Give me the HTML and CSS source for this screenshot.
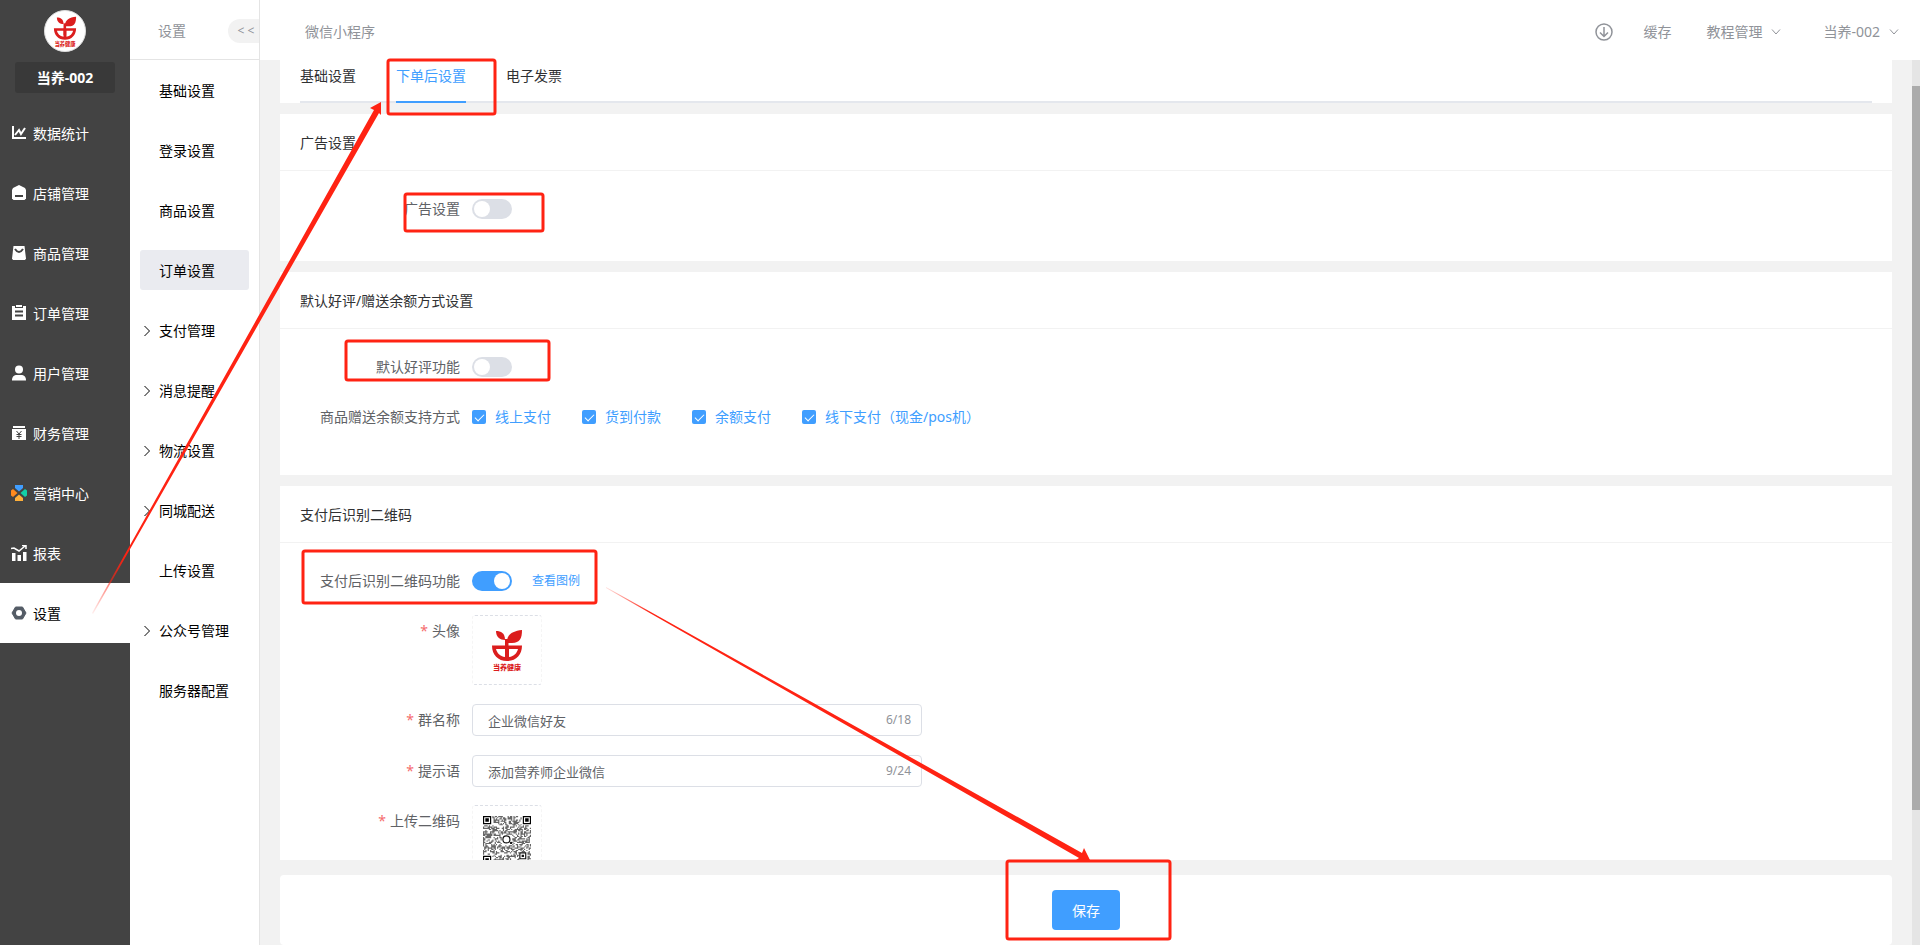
FILE: index.html
```html
<!DOCTYPE html>
<html lang="zh-CN">
<head>
    <meta charset="UTF-8">
    <meta name="viewport" content="width=device-width, initial-scale=1.0">
    <title>订单设置</title>
    <link rel="stylesheet" href="styles.css">
</head>
<body>
    <svg class="defs" width="0" height="0" aria-hidden="true">
        <symbol id="logo" viewBox="0 0 40 50" overflow="visible">
            <g fill="#db1d1d">
                <path d="M9 6c5 0 9 2 9 9-5 0-9-3-9-9z"/>
                <path d="M35 5c0 8-2 13-10 13h-4l-1-1C20 9 26 6 35 5z"/>
                <path d="M5 20.500h30C35 30 29 36 20 36S5 30 5 20.500zM9 24c1 4 4 7.500 9 8v-8zM22 24v8c5-.5 8-4 9-8z" fill-rule="evenodd"/>
                <path d="M18 14h3.500v16H18z"/>
                <text x="20" y="45" text-anchor="middle" class="logo-text">当养健康</text>
            </g>
        </symbol>
        <symbol id="arrow-down" viewBox="0 0 10 6">
            <path d="M1 .5l4 4.500 4-4.500" fill="none" stroke="currentColor"/>
        </symbol>
        <symbol id="arrow-right" viewBox="0 0 6 12">
            <path d="M.5 1l5 5-5 5" fill="none" stroke="currentColor"/>
        </symbol>
    </svg>

    <div class="app">
        <aside class="sidebar">
            <div class="brand">
                <span class="brand-logo"><svg width="30" height="37"><use href="#logo"/></svg></span>
                <span class="brand-name">当养-002</span>
            </div>
            <nav class="main-nav">
                <a href="#">
                    <svg viewBox="0 0 16 16"><path d="M2 1v12h13" fill="none" stroke="#fff" stroke-width="2"/><path d="M4 10l4-5 2 4 4-6" fill="none" stroke="#fff" stroke-width="2"/></svg>
                    <span>数据统计</span>
                </a>
                <a href="#">
                    <svg viewBox="0 0 16 16"><path d="M8 0l6 3 1 2v8.500L13.500 15h-11L1 13.500V5l1-2z" fill="#fff"/><path d="M4 11h8" stroke="#434343" stroke-width="2"/></svg>
                    <span>店铺管理</span>
                </a>
                <a href="#">
                    <svg viewBox="0 0 16 16"><path d="M2.500 1h11L15 13.500 14 15H2l-1-1.500z" fill="#fff"/><path d="M4 4q4 6 8 0" fill="none" stroke="#434343" stroke-width="2"/></svg>
                    <span>商品管理</span>
                </a>
                <a href="#">
                    <svg viewBox="0 0 16 16"><path d="M1 1h3v2h8V1h3v14H1z" fill="#fff"/><path d="M5 0h6v2H5z" fill="#fff"/><path d="M4 6.500h8M4 10.500h8" stroke="#434343" stroke-width="2"/></svg>
                    <span>订单管理</span>
                </a>
                <a href="#">
                    <svg viewBox="0 0 16 16"><circle cx="8" cy="4.500" r="4" fill="#fff"/><path d="M1 15.500c0-4 2-5.500 5-5.500h4c3 0 5 1.500 5 5.500z" fill="#fff"/></svg>
                    <span>用户管理</span>
                </a>
                <a href="#">
                    <svg viewBox="0 0 16 16"><path d="M2 1h12v2H2zM1 4h14v11H1z" fill="#fff"/><path d="M5.500 6L8 9l2.500-3M8 9v5M5.500 9.500h5M5.500 11.500h5" fill="none" stroke="#434343"/></svg>
                    <span>财务管理</span>
                </a>
                <a href="#">
                    <svg viewBox="0 0 16 16"><path d="M4 0h8v3L8 6.500 4 3z" fill="#409eff"/><path d="M4 16h8v-3L8 9.500 4 13z" fill="#ffb03a"/><path d="M0 5.500L2 4l4.500 4L2 12l-2-1.500z" fill="#ff8a1e"/><path d="M16 5.500L14 4 9.500 8l4.500 4 2-1.500z" fill="#12d0a8"/></svg>
                    <span>营销中心</span>
                </a>
                <a href="#">
                    <svg viewBox="0 0 16 16"><path d="M1 8h3.500v8H1zM6.500 10H10v6H6.500zM12 7h3.500v9H12z" fill="#fff"/><path d="M0 3.500l3-.5 5 3 6-5M11 .5h4v3.500" fill="none" stroke="#fff" stroke-width="1.500"/></svg>
                    <span>报表</span>
                </a>
                <a href="#" class="active">
                    <svg viewBox="0 0 16 16"><path d="M4.500 2h7L15 8l-3.500 6h-7L1 8z" fill="#545c66" stroke="#545c66" stroke-linejoin="round"/><circle cx="8" cy="8" r="3" fill="#fff"/></svg>
                    <span>设置</span>
                </a>
            </nav>
        </aside>

        <aside class="submenu">
            <div class="submenu-head">
                <span>设置</span>
                <button type="button" class="fold">&lt; &lt;</button>
            </div>
            <nav class="sub-nav">
                <a href="#">基础设置</a>
                <a href="#">登录设置</a>
                <a href="#">商品设置</a>
                <a href="#" class="active">订单设置</a>
                <a href="#" class="has-children"><svg width="6" height="12"><use href="#arrow-right"/></svg>支付管理</a>
                <a href="#" class="has-children"><svg width="6" height="12"><use href="#arrow-right"/></svg>消息提醒</a>
                <a href="#" class="has-children"><svg width="6" height="12"><use href="#arrow-right"/></svg>物流设置</a>
                <a href="#" class="has-children"><svg width="6" height="12"><use href="#arrow-right"/></svg>同城配送</a>
                <a href="#">上传设置</a>
                <a href="#" class="has-children"><svg width="6" height="12"><use href="#arrow-right"/></svg>公众号管理</a>
                <a href="#">服务器配置</a>
            </nav>
        </aside>

        <div class="page">
            <header class="topbar">
                <span class="topbar-title">微信小程序</span>
                <div class="topbar-tools">
                    <svg width="18" height="18" viewBox="0 0 18 18" fill="none" stroke="#909399"><circle cx="9" cy="9" r="8" stroke-width="1.500"/><path d="M9 4v9M5 9.500l4 4 4-4" stroke-width="1.500"/></svg>
                    <a href="#">缓存</a>
                    <a href="#" class="dropdown">教程管理<svg width="10" height="6"><use href="#arrow-down"/></svg></a>
                    <a href="#" class="dropdown">当养-002<svg width="10" height="6"><use href="#arrow-down"/></svg></a>
                </div>
            </header>

            <div class="body">
                <main class="content">
                    <div class="scroll-area">
                        <div class="card tabs-card">
                            <nav class="tabs">
                                <a href="#">基础设置</a>
                                <a href="#" class="active">下单后设置</a>
                                <a href="#">电子发票</a>
                            </nav>
                        </div>

                        <section class="card">
                            <h2>广告设置</h2>
                            <div class="form">
                                <div class="form-item">
                                    <label for="ad">广告设置</label>
                                    <input type="checkbox" class="switch" id="ad">
                                </div>
                            </div>
                        </section>

                        <section class="card">
                            <h2>默认好评/赠送余额方式设置</h2>
                            <div class="form form-tall">
                                <div class="form-item">
                                    <label for="praise">默认好评功能</label>
                                    <input type="checkbox" class="switch" id="praise">
                                </div>
                                <div class="form-item">
                                    <span class="label">商品赠送余额支持方式</span>
                                    <div class="checks">
                                        <label><input type="checkbox" checked>线上支付</label>
                                        <label><input type="checkbox" checked>货到付款</label>
                                        <label><input type="checkbox" checked>余额支付</label>
                                        <label><input type="checkbox" checked>线下支付（现金/pos机）</label>
                                    </div>
                                </div>
                            </div>
                        </section>

                        <section class="card">
                            <h2>支付后识别二维码</h2>
                            <div class="form">
                                <div class="form-item">
                                    <label for="qr-switch">支付后识别二维码功能</label>
                                    <input type="checkbox" class="switch" id="qr-switch" checked>
                                    <a href="#" class="example">查看图例</a>
                                </div>
                                <div class="form-item upload-item">
                                    <span class="label required">头像</span>
                                    <div class="upload"><svg width="40" height="50"><use href="#logo"/></svg></div>
                                </div>
                                <div class="form-item">
                                    <label for="group" class="required">群名称</label>
                                    <div class="field"><input type="text" id="group" value="企业微信好友"><span>6/18</span></div>
                                </div>
                                <div class="form-item">
                                    <label for="tip" class="required">提示语</label>
                                    <div class="field"><input type="text" id="tip" value="添加营养师企业微信"><span>9/24</span></div>
                                </div>
                                <div class="form-item upload-item">
                                    <span class="label required">上传二维码</span>
                                    <div class="upload"><svg id="qr" width="48" height="48" viewBox="0 0 41 41"></svg></div>
                                </div>
                            </div>
                        </section>
                    </div>

                    <footer class="footer">
                        <button type="button" class="save">保存</button>
                    </footer>
                </main>
                <div class="scrollbar"><div class="thumb"></div></div>
            </div>
        </div>
    </div>

    <svg class="marks" width="1200" height="945" aria-hidden="true">
        <defs>
            <linearGradient id="fade1" gradientUnits="userSpaceOnUse" x1="90" y1="618" x2="125" y2="556">
                <stop offset="0" stop-color="#ff2313" stop-opacity="0"/>
                <stop offset="1" stop-color="#ff2313"/>
            </linearGradient>
            <linearGradient id="fade2" gradientUnits="userSpaceOnUse" x1="600" y1="584" x2="650" y2="612">
                <stop offset="0" stop-color="#ff2313" stop-opacity="0"/>
                <stop offset="1" stop-color="#ff2313"/>
            </linearGradient>
        </defs>
        <g fill="none" stroke="#ff2313" stroke-width="3">
            <rect x="388" y="60" width="107" height="54" rx="2"/>
            <rect x="405" y="194" width="138" height="37" rx="2"/>
            <rect x="346" y="341" width="203" height="39" rx="2"/>
            <rect x="303" y="551" width="293" height="52" rx="2"/>
            <rect x="1007" y="861" width="163" height="78" rx="2"/>
        </g>
        <path d="M92 613L374 110L370 108L381 102L381 115L379 113L93 614z" fill="url(#fade1)"/>
        <path d="M606 588L606 587L1082 853L1084 848L1090 860L1076 860L1079 858z" fill="url(#fade2)"/>
    </svg>

    <script>
        const qr = document.getElementById('qr');
        const size = 41;
        let seed = 7;
        let d = '';

        function reserved(x, y) {
            const corner = (x < 8 && y < 8) || (x > 32 && y < 8) || (x < 8 && y > 32);
            const center = x > 15 && x < 25 && y > 15 && y < 25;
            return corner || center || (x > 30 && x < 38 && y > 30 && y < 38);
        }

        for (let y = 0; y < size; y++) {
            for (let x = 0; x < size; x++) {
                seed = (seed * 1103515245 + 12345) % 2147483648;
                if (!reserved(x, y) && seed / 2147483648 < 0.5) {
                    d += `M${x} ${y}h1v1h-1z`;
                }
            }
        }

        const finder = (x, y) => `<path d="M${x} ${y}h7v7h-7zM${x + 1} ${y + 1}v5h5v-5zM${x + 2} ${y + 2}h3v3h-3z"/>`;
        qr.innerHTML = `<path d="${d}" fill="#666"/>` + finder(0, 0) + finder(34, 0) + finder(0, 34) +
            '<path d="M31.500 31.500h5v5h-5zM33.500 33.500h1v1h-1z" fill="none" stroke="#111"/>' +
            '<circle cx="20" cy="20" r="3" fill="none" stroke="#111"/><circle cx="24" cy="23" r="1" fill="#111"/>';
    </script>
</body>
</html>
```

FILE: styles.css
```css
* {
    box-sizing: border-box;
}
body {
    margin: 0;
    font-family: "Noto Sans", "Noto Sans CJK SC", sans-serif;
    font-size: 14px;
    line-height: 20px;
    color: #303133;
    background: #f2f2f2;
}
a {
    color: inherit;
    text-decoration: none;
}
button,
input {
    font-family: inherit;
}
.defs {
    position: absolute;
}
.logo-text {
    font-size: 7px;
    font-weight: 900;
}
.app {
    display: flex;
    height: 100vh;
    overflow: hidden;
}

/* left dark menu */
.sidebar {
    flex: 0 0 130px;
    background: #434343;
    color: #fff;
}
.brand {
    display: flex;
    flex-direction: column;
    align-items: center;
    gap: 10px;
    padding: 10px 15px;
}
.brand-logo {
    display: flex;
    justify-content: center;
    width: 42px;
    height: 42px;
    padding-top: 2px;
    border: 1px solid #ddd;
    border-radius: 50%;
    background: #fff;
}
.brand-name {
    width: 100%;
    height: 31px;
    line-height: 31px;
    border-radius: 3px;
    background: #393939;
    text-align: center;
    font-weight: bold;
}
.main-nav a {
    display: flex;
    align-items: center;
    gap: 6px;
    height: 60px;
    padding-left: 11px;
}
.main-nav svg {
    width: 16px;
    height: 16px;
}
.main-nav span {
    padding-top: 2px;
}
.main-nav .active {
    background: #fff;
    color: #000;
}

/* second level menu */
.submenu {
    flex: 0 0 130px;
    border-right: 1px solid #e4e4e4;
    background: #fff;
    color: #000;
}
.submenu-head {
    display: flex;
    align-items: center;
    justify-content: space-between;
    height: 60px;
    padding: 2px 0 0 28px;
    border-bottom: 1px solid #e4e4e4;
    color: #909399;
}
.fold {
    width: 31px;
    height: 24px;
    padding: 0 0 0 5px;
    border: none;
    border-radius: 12px 0 0 12px;
    background: #f2f2f2;
    color: #909399;
    font-size: 12px;
}
.sub-nav {
    display: flex;
    flex-direction: column;
    gap: 20px;
    padding: 10px;
}
.sub-nav a {
    display: flex;
    align-items: center;
    height: 40px;
    padding: 2px 0 0 19px;
    border-radius: 3px;
}
.sub-nav .has-children {
    gap: 9px;
    padding-left: 4px;
}
.sub-nav .active {
    background: #eaebf0;
}

/* top bar */
.page {
    flex: 1;
    min-width: 0;
    display: flex;
    flex-direction: column;
}
.topbar {
    flex: 0 0 60px;
    display: flex;
    align-items: center;
    justify-content: space-between;
    padding: 3px 21px 0 45px;
    background: #fff;
    color: #909399;
}
.topbar-tools {
    display: flex;
    align-items: center;
    gap: 30px;
}
.topbar-tools .dropdown {
    display: flex;
    align-items: center;
    gap: 9px;
    padding-left: 5px;
}
.topbar-tools .dropdown + .dropdown {
    padding-left: 12px;
}

/* content */
.body {
    flex: 1;
    min-height: 0;
    display: flex;
}
.content {
    flex: 1;
    min-width: 0;
    display: flex;
    flex-direction: column;
    gap: 15px;
    padding: 0 20px;
}
.scroll-area {
    flex: 1;
    min-height: 0;
    overflow: hidden;
}
.card {
    margin-bottom: 11px;
    background: #fff;
}
.tabs-card {
    padding: 0 20px;
}
.tabs {
    display: flex;
    gap: 40px;
    box-shadow: inset 0 -2px #e4e7ed;
}
.tabs a {
    padding-bottom: 9px;
    border-bottom: 2px solid transparent;
    line-height: 32px;
}
.tabs .active {
    border-bottom-color: #409eff;
    color: #409eff;
}
h2 {
    margin: 0;
    padding: 19px 20px 17px;
    border-bottom: 1px solid #f2f2f2;
    font-size: 14px;
    font-weight: normal;
}
.form {
    padding: 22px 20px 18px;
}
.form-tall {
    padding-bottom: 24px;
}
.form-item {
    display: flex;
    min-height: 32px;
    margin-bottom: 18px;
    align-items: center;
    color: #606266;
}
.form-item > label,
.form-item > .label {
    width: 172px;
    padding-right: 12px;
    line-height: 32px;
    text-align: right;
    white-space: nowrap;
}
.upload-item {
    align-items: flex-start;
}
.required::before {
    content: "*";
    margin-right: 4px;
    color: #f56c6c;
}
.switch {
    appearance: none;
    display: flex;
    align-items: center;
    width: 40px;
    height: 20px;
    margin: 0;
    padding: 2px;
    border-radius: 10px;
    background: #dcdfe6;
}
.switch::before {
    content: "";
    width: 16px;
    height: 16px;
    border-radius: 50%;
    background: #fff;
}
.switch:checked {
    justify-content: flex-end;
    background: #409eff;
}
.checks {
    display: flex;
    gap: 31px;
    color: #409eff;
}
.checks label {
    display: flex;
    align-items: center;
    gap: 9px;
}
.checks input {
    appearance: none;
    display: flex;
    justify-content: center;
    width: 14px;
    height: 14px;
    margin: 0;
    border-radius: 2px;
    background: #409eff;
}
.checks input:checked::before {
    content: "";
    width: 4px;
    height: 8px;
    margin-top: 2px;
    border: solid #fff;
    border-width: 0 1px 1px 0;
    transform: rotate(45deg);
}
.example {
    margin-left: 20px;
    color: #409eff;
    font-size: 12px;
}
.upload {
    display: flex;
    align-items: center;
    justify-content: center;
    width: 70px;
    height: 70px;
    border: 1px dashed #dcdfe6;
    border-right-color: #f5f5f5;
    border-left-color: #f5f5f5;
    border-radius: 3px;
}
.field {
    display: flex;
    align-items: center;
    width: 450px;
    height: 32px;
    margin-top: 1px;
    padding: 0 10px 0 15px;
    border: 1px solid #dcdfe6;
    border-radius: 4px;
    color: #909399;
    font-size: 12px;
}
.field input {
    flex: 1;
    min-width: 0;
    padding: 0;
    border: none;
    outline: none;
    color: #606266;
    font-size: 13px;
}
.footer {
    flex: 0 0 70px;
    display: flex;
    align-items: center;
    justify-content: center;
    border-radius: 4px;
    background: #fff;
}
.save {
    height: 40px;
    padding: 0 20px;
    border: none;
    border-radius: 4px;
    background: #409eff;
    color: #fff;
    font-size: 14px;
}
.scrollbar {
    display: flex;
    width: 8px;
    padding: 26px 0 135px;
    background: #e5e5e5;
}
.thumb {
    width: 100%;
    background: #ababab;
}

/* red callouts over the page */
.marks {
    position: absolute;
    top: 0;
    left: 0;
    pointer-events: none;
}
```
